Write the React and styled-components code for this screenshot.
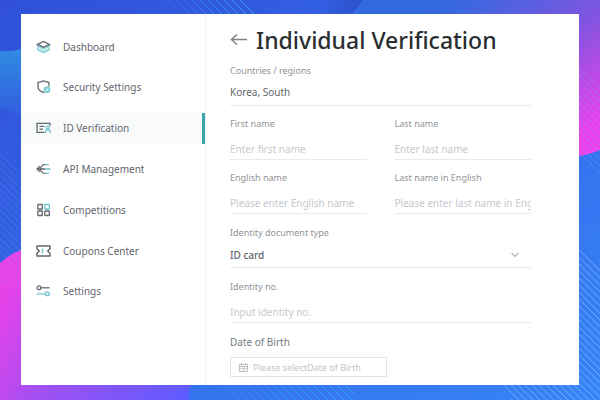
import React from 'react';
import styled, { createGlobalStyle } from 'styled-components';

const Global = createGlobalStyle`
  * { box-sizing: border-box; }
  body { margin: 0; font-family: "Noto Sans", sans-serif; color: #555c61; }
`;

const Page = styled.div`
  position: relative;
  min-height: 100vh;
  padding: 14px 21px 15px;
  display: grid;
  overflow: hidden;
`;

const Backdrop = styled.svg`
  position: absolute;
  inset: 0;
  width: 100%;
  height: 100%;
`;

const Panel = styled.div`
  position: relative;
  display: grid;
  grid-template-columns: 185px 1fr;
  background: #fff;
`;

const Sidebar = styled.nav`
  border-right: 1px solid #f3f4f5;
  padding: 17px 0 78px;
  display: flex;
  flex-direction: column;
  justify-content: space-between;
`;

const NavLink = styled.a`
  display: flex;
  align-items: center;
  gap: 12px;
  height: 31px;
  padding-left: 15px;
  font-size: 10px;
  font-weight: 400;
  color: #63666d;
  text-decoration: none;
  white-space: nowrap;
  background: ${(p) => (p.$active ? '#f9fbfb' : 'transparent')};
  border-right: 3px solid ${(p) => (p.$active ? '#38a5ad' : 'transparent')};
`;

const NavIcon = styled.svg`
  width: 15px;
  height: 14px;
  flex: none;
  fill: none;
  stroke: #62686e;
  stroke-width: 1.3;
`;

const Main = styled.main`
  padding: 12px 48px 8px 24px;
  min-width: 0;
`;

const Header = styled.header`
  display: flex;
  align-items: center;
  gap: 8px;
  height: 28px;
`;

const BackButton = styled.button`
  display: flex;
  padding: 0;
  border: 0;
  background: none;
  color: #808488;
`;

const Title = styled.h1`
  margin: 0;
  font-size: 23px;
  line-height: 28px;
  font-weight: 500;
  color: #2b2e31;
  white-space: nowrap;
`;

const Form = styled.form`
  display: grid;
  grid-template-columns: 1fr 1fr;
  grid-template-rows: 53px 54px 55px 54px 55px auto;
  column-gap: 28px;
  padding-top: 10px;
`;

const FieldBox = styled.div`
  grid-column: ${(p) => (p.$wide ? '1 / -1' : 'auto')};
  min-width: 0;
`;

const Label = styled.label`
  display: block;
  font-size: ${(p) => (p.$large ? 10 : 9)}px;
  line-height: 14px;
  color: ${(p) => (p.$large ? '#777c80' : '#909498')};
`;

const Input = styled.input`
  display: block;
  width: 100%;
  height: ${(p) => (p.$short ? 28 : 29)}px;
  padding: ${(p) => (p.$short ? '0' : '8px 0 0')};
  border: 0;
  border-bottom: 1px solid #e8eaeb;
  border-radius: 0;
  outline: 0;
  background: none;
  font: 400 10px "Noto Sans", sans-serif;
  color: #60666a;
  &::placeholder { color: #c5c9cd; opacity: 1; }
`;

const SelectWrap = styled.div`
  display: flex;
  align-items: center;
  border-bottom: 1px solid #e8eaeb;
  height: 28px;
  padding: 3px 11px 0 0;
  color: #b4b8bb;
`;

const Select = styled.select`
  flex: 1;
  appearance: none;
  border: 0;
  padding: 0;
  outline: 0;
  background: none;
  font: 500 10px "Noto Sans", sans-serif;
  color: #60666a;
`;

const DateBox = styled.div`
  display: flex;
  align-items: center;
  gap: 5px;
  width: 52%;
  height: 20px;
  margin-top: 8px;
  padding: 0 8px;
  border: 1px solid #e1e4e6;
  border-radius: 1px;
  color: #b9bec3;
`;

const DateInput = styled.input`
  flex: 1;
  min-width: 0;
  padding: 0;
  border: 0;
  outline: 0;
  background: none;
  font: 400 9px "Noto Sans", sans-serif;
  &::placeholder { color: #bfc4c8; opacity: 1; }
`;

const teal = '#6cc5cc';

const NAV = [
  ['Dashboard', <>
    <path d="M1.500 5v5l6 3 6-3V5l-6 3z" fill="#a4e0e2" stroke={teal} strokeWidth=".8" />
    <path d="M1.500 7.500l6 3 6-3" stroke="#fff" strokeWidth=".7" />
    <path d="M1.500 4.400l6-2.900 6 2.900-6 2.900z" fill="#fff" />
  </>],
  ['Security Settings', <>
    <path d="M8.300 12.600C4 11.500 2 10 2 7V2.600L7.500.9l5.500 1.700V6.500" />
    <circle cx="11" cy="9.800" r="2.600" fill="#a4e0e2" stroke={teal} />
    <path d="M9.800 9.800l.9.9 1.500-1.700" stroke="#fff" strokeWidth=".7" />
  </>],
  ['ID Verification', <>
    <path d="M8.500 11.300H1v-9h13v2.500M3.500 5.300h5M3.500 8.100h3.500" />
    <circle cx="11.800" cy="6.600" r="1.500" stroke={teal} />
    <path d="M9.300 12c.3-4.800 4.700-4.800 5 0" stroke={teal} />
  </>],
  ['API Management', <>
    <path d="M1 7h8M3.800 4.200L1 7l2.800 2.800M9.500 2.700H8C5.800 2.700 5.500 5 3.800 7 5.500 9 5.800 11.300 8 11.300h1.500" />
    <path d="M9.500 2.700h3.500M9 7h5.500M9.500 11.300h3.500" stroke={teal} />
  </>],
  ['Competitions', <>
    <rect x="1.800" y="1.500" width="4.500" height="4.500" rx=".6" />
    <rect x="1.800" y="8" width="4.500" height="4.500" rx=".6" />
    <rect x="8.800" y="8" width="4.500" height="4.500" rx=".6" />
    <rect x="8.800" y="1.500" width="4.500" height="4.500" rx=".6" stroke={teal} />
  </>],
  ['Coupons Center', <>
    <path d="M1 2h13v2.800l-2.300 2.200 2.300 2.200V12H1V9.200L3.300 7 1 4.800z" strokeLinejoin="round" strokeWidth="1.500" />
    <path d="M6.500 4.500v5" stroke={teal} />
  </>],
  ['Settings', <>
    <circle cx="3" cy="3.800" r="1.900" />
    <path d="M4.900 3.800h8.600" />
    <circle cx="11.300" cy="9.800" r="1.900" stroke={teal} />
    <path d="M1 9.800h8.400M13.200 9.800h1" stroke={teal} />
  </>],
];

function Field({ id, label, placeholder, value, wide, short }) {
  return (
    <FieldBox $wide={wide}>
      <Label htmlFor={id}>{label}</Label>
      <Input id={id} placeholder={placeholder} defaultValue={value} $short={short} />
    </FieldBox>
  );
}

function BackdropArt() {
  return (
    <Backdrop viewBox="0 0 600 400" preserveAspectRatio="none" aria-hidden="true">
      <defs>
        <linearGradient id="base" x1="0" y1="0" x2="1" y2="1">
          <stop offset="0" stopColor="#3050d8" />
          <stop offset="1" stopColor="#3784fa" />
        </linearGradient>
        <linearGradient id="wave" x1="0" y1="0" x2="0" y2="1">
          <stop offset="0" stopColor="#318ae2" />
          <stop offset="1" stopColor="#315fdf" />
        </linearGradient>
        <linearGradient id="pinkLeft" gradientUnits="userSpaceOnUse" x1="0" y1="310" x2="190" y2="400">
          <stop offset="0" stopColor="#e642ea" />
          <stop offset=".3" stopColor="#a64ff2" />
          <stop offset="1" stopColor="#5c5cff" />
        </linearGradient>
        <linearGradient id="pinkRight" gradientUnits="userSpaceOnUse" x1="460" y1="-20" x2="575" y2="140">
          <stop offset="0" stopColor="#326ae0" />
          <stop offset=".12" stopColor="#3c67e0" />
          <stop offset=".54" stopColor="#8055e0" />
          <stop offset="1" stopColor="#eb41ec" />
        </linearGradient>
        <linearGradient id="shade" x1="0" y1="0" x2="1" y2="0">
          <stop offset="0" stopColor="#2a4cc4" stopOpacity="0" />
          <stop offset="1" stopColor="#2a4cc4" stopOpacity=".8" />
        </linearGradient>
        <linearGradient id="fade" x1="0" y1="0" x2="1" y2="0">
          <stop offset="0" stopColor="#fff" stopOpacity="0" />
          <stop offset="1" stopColor="#fff" />
        </linearGradient>
        <mask id="topFade"><path d="M155 0h90l12 14h-90z" fill="url(#fade)" /></mask>
        <mask id="bottomFade"><path d="M200 385h150l4 8-3 7H200z" fill="url(#fade)" /></mask>
        <pattern id="lines" width="7" height="7" patternUnits="userSpaceOnUse">
          <path d="M-1-1l9 9" stroke="#7fb2ff" strokeWidth="1" opacity=".75" />
        </pattern>
        <pattern id="cyan" width="8" height="8" patternUnits="userSpaceOnUse">
          <path d="M-1-1l10 10" stroke="#2fabf5" strokeWidth="1" />
        </pattern>
      </defs>
      <path d="M0 0h600v400H0z" fill="url(#base)" />
      <path d="M0 51q12 1 21-2v66q-10-5-21-8z" fill="url(#wave)" />
      <path d="M0 150l21 21v80l-21 12z" fill="url(#lines)" opacity=".3" />
      <path d="M0 263q10-9 21-13v135h170q-3 7-2 15H0z" fill="url(#pinkLeft)" />
      <path d="M0 263q10-9 21-13v35H0z" fill="url(#lines)" opacity=".3" />
      <path d="M320 0h43l-11 14h-32z" fill="url(#shade)" />
      <path d="M352 14l11-14h237v150q-12 5-21 6V14z" fill="url(#pinkRight)" />
      <path d="M150 0h110v14H150z" fill="url(#cyan)" mask="url(#topFade)" />
      <path d="M579 63l21 21v95l-21-21z" fill="url(#lines)" opacity=".4" />
      <path d="M579 247l21 21v132h-88l-11-15h78z" fill="url(#lines)" />
      <path d="M200 385h155v15H200z" fill="url(#cyan)" mask="url(#bottomFade)" />
    </Backdrop>
  );
}

export default function App() {
  return (
    <>
      <Global />
      <Page>
        <BackdropArt />
        <Panel>
          <Sidebar>
            {NAV.map(([name, art]) => (
              <NavLink key={name} href="#" $active={name === 'ID Verification'}>
                <NavIcon viewBox="0 0 15 14" aria-hidden="true">{art}</NavIcon>
                {name}
              </NavLink>
            ))}
          </Sidebar>
          <Main>
            <Header>
              <BackButton type="button" aria-label="Back">
                <svg width="18" height="14" viewBox="0 0 18 14" fill="none" stroke="currentColor" strokeWidth="1.5">
                  <path d="M17 6.500H1.500M7 1.500L1.500 6.500 7 11.500" />
                </svg>
              </BackButton>
              <Title>Individual Verification</Title>
            </Header>
            <Form>
              <Field id="country" label="Countries / regions" value="Korea, South" wide short />
              <Field id="first" label="First name" placeholder="Enter first name" />
              <Field id="last" label="Last name" placeholder="Enter last name" />
              <Field id="firstEn" label="English name" placeholder="Please enter English name" />
              <Field id="lastEn" label="Last name in English" placeholder="Please enter last name in English" />
              <FieldBox $wide>
                <Label htmlFor="doc">Identity document type</Label>
                <SelectWrap>
                  <Select id="doc"><option>ID card</option></Select>
                  <svg width="10" height="6" viewBox="0 0 10 6" fill="none" stroke="currentColor" strokeWidth="1.2" aria-hidden="true">
                    <path d="M1.500 1l3.500 3.500L8.500 1" />
                  </svg>
                </SelectWrap>
              </FieldBox>
              <Field id="idno" label="Identity no." placeholder="Input identity no." wide />
              <FieldBox $wide>
                <Label htmlFor="dob" $large>Date of Birth</Label>
                <DateBox>
                  <svg width="9" height="9" viewBox="0 0 9 9" fill="none" stroke="currentColor" aria-hidden="true">
                    <path d="M.5 1.500h8v7h-8zM.5 3.500h8M2.500 0v2M6.500 0v2" />
                    <path d="M1 5.500h7M3.500 4v4M5.500 4v4" strokeWidth=".6" />
                  </svg>
                  <DateInput id="dob" placeholder="Please selectDate of Birth" />
                </DateBox>
              </FieldBox>
            </Form>
          </Main>
        </Panel>
      </Page>
    </>
  );
}
